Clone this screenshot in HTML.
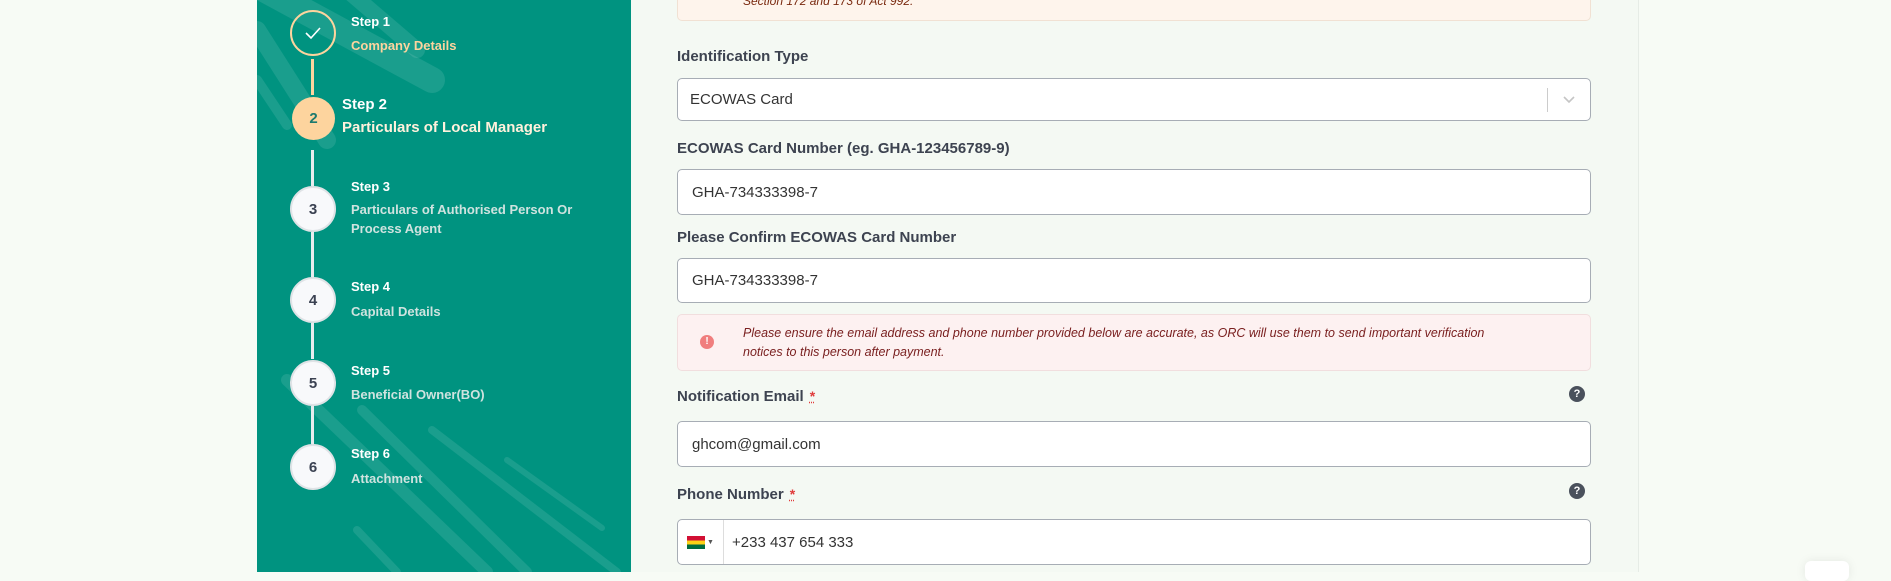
<!DOCTYPE html>
<html><head><meta charset="utf-8"><style>
*{box-sizing:border-box;margin:0;padding:0}
body{width:1891px;height:572px;overflow:hidden;background:#f7fbf5;font-family:"Liberation Sans",sans-serif;position:relative}
.side{position:absolute;left:257px;top:0;width:374px;height:572px;background:#009380;overflow:hidden}
.main{position:absolute;left:631px;top:0;width:1008px;height:572px;background:#f4f9f3;border-right:1px solid #e6ece6}
.circ{position:absolute;left:290px;width:46px;height:46px;border-radius:50%;background:#f8f9fb;border:2px solid #dfe3e6;color:#3b4252;font-size:15px;display:flex;align-items:center;justify-content:center;font-weight:600}
.line{position:absolute;left:311px;width:3px;background:#e8ecee}
.st{position:absolute;left:351px;color:#fff;font-weight:bold;font-size:13px}
.ds{position:absolute;left:351px;color:#cfe3df;font-weight:bold;font-size:13px;line-height:19px}
.lbl{position:absolute;left:677px;font-size:15px;font-weight:bold;color:#3d4350}
.inp{position:absolute;left:677px;width:914px;background:#fff;border:1px solid #a7adb5;border-radius:5px;font-size:15px;color:#333;padding-left:14px;display:flex;align-items:center}
.help{position:absolute;left:1569px;width:16px;height:16px;border-radius:50%;background:#4a515c;color:#fff;font-size:11px;font-weight:bold;text-align:center;line-height:16px}
.req{color:#e03b3b;font-size:14px;margin-left:6px;text-decoration:underline dotted}
</style></head><body>
<div class="side">
<svg width="374" height="572" style="position:absolute;left:0;top:0">
<g stroke="rgba(255,255,255,0.1)" stroke-linecap="round">
<line x1="-10" y1="-20" x2="175" y2="80" stroke-width="26"/>
<line x1="0" y1="30" x2="70" y2="140" stroke-width="18"/>
<line x1="0" y1="80" x2="30" y2="125" stroke-width="10"/>
<line x1="90" y1="-10" x2="160" y2="50" stroke-width="16"/>
<line x1="30" y1="380" x2="230" y2="572" stroke-width="12"/>
<line x1="105" y1="410" x2="270" y2="572" stroke-width="10"/>
<line x1="175" y1="430" x2="360" y2="572" stroke-width="8"/>
<line x1="250" y1="460" x2="345" y2="528" stroke-width="6"/>
<line x1="100" y1="530" x2="140" y2="572" stroke-width="8"/>
</g></svg>
</div>
<div class="line" style="top:59px;height:36px;background:#fdd49e"></div>
<div class="line" style="top:150px;height:36px"></div>
<div class="line" style="top:232px;height:45px"></div>
<div class="line" style="top:323px;height:36px"></div>
<div class="line" style="top:406px;height:38px"></div>
<div class="circ" style="top:10px;background:transparent;border:2px solid #fdd49e"><svg width="18" height="14"><path d="M2 7 L7 12 L16 2" fill="none" stroke="#fff" stroke-width="1.6"/></svg></div>
<div class="st" style="top:14px">Step 1</div><div class="ds" style="top:36px;color:#fdd49e">Company Details</div>
<div class="circ" style="top:97px;left:292px;width:43px;height:43px;background:#fdd49e;border:none;color:#1c7a6e">2</div>
<div class="st" style="top:96px;left:342px;font-size:15px">Step 2</div><div class="ds" style="top:118px;left:342px;font-size:15px;color:#fff1dc">Particulars of Local Manager</div>
<div class="circ" style="top:186px">3</div>
<div class="st" style="top:179px">Step 3</div><div class="ds" style="top:200px">Particulars of Authorised Person Or<br>Process Agent</div>
<div class="circ" style="top:277px">4</div>
<div class="st" style="top:279px">Step 4</div><div class="ds" style="top:302px">Capital Details</div>
<div class="circ" style="top:360px">5</div>
<div class="st" style="top:363px">Step 5</div><div class="ds" style="top:385px">Beneficial Owner(BO)</div>
<div class="circ" style="top:444px">6</div>
<div class="st" style="top:446px">Step 6</div><div class="ds" style="top:469px">Attachment</div>

<div class="main"></div>
<div style="position:absolute;left:677px;top:-10px;width:914px;height:31px;background:#fef4ec;border:1px solid #f1e1d3;border-radius:5px"></div>
<div style="position:absolute;left:743px;top:-6px;font-size:12px;font-style:italic;color:#7a2a10">Section 172 and 173 of Act 992.</div>

<div class="lbl" style="top:48px">Identification Type</div>
<div class="inp" style="top:78px;height:43px;padding-left:12px">ECOWAS Card
<div style="position:absolute;right:42px;top:9px;width:1px;height:24px;background:#ccc"></div>
<svg style="position:absolute;right:14px;top:16px" width="14" height="10"><path d="M2 2 L7 7 L12 2" fill="none" stroke="#c5c5c5" stroke-width="1.6"/></svg></div>
<div class="lbl" style="top:140px">ECOWAS Card Number (eg. GHA-123456789-9)</div>
<div class="inp" style="top:169px;height:46px">GHA-734333398-7</div>
<div class="lbl" style="top:229px">Please Confirm ECOWAS Card Number</div>
<div class="inp" style="top:258px;height:45px">GHA-734333398-7</div>

<div style="position:absolute;left:677px;top:314px;width:914px;height:57px;background:#fdf1f1;border:1px solid #f1dede;border-radius:5px"></div>
<div style="position:absolute;left:700px;top:335px;width:14px;height:14px;border-radius:50%;background:#f07e7e;color:#fff;font-size:10px;font-weight:bold;text-align:center;line-height:14px">!</div>
<div style="position:absolute;left:743px;top:324px;font-size:12.5px;font-style:italic;color:#7a2020;line-height:19px;white-space:nowrap">Please ensure the email address and phone number provided below are accurate, as ORC will use them to send important verification<br>notices to this person after payment.</div>

<div class="lbl" style="top:388px">Notification Email<span class="req">*</span></div>
<div class="help" style="top:386px">?</div>
<div class="inp" style="top:421px;height:46px">ghcom@gmail.com</div>
<div class="lbl" style="top:486px">Phone Number<span class="req">*</span></div>
<div class="help" style="top:483px">?</div>
<div class="inp" style="top:519px;height:46px;padding-left:0">
<div style="width:46px;height:100%;border-right:1px solid #ddd;display:flex;align-items:center;padding-left:9px">
<div style="width:18px;height:13px;background:linear-gradient(#d21034 33%,#fcd116 33%,#fcd116 66%,#006b3f 66%)"></div><span style="font-size:7px;color:#555;margin-left:2px">▼</span></div>
<span style="margin-left:8px">+233 437 654 333</span></div>
<div style="position:absolute;left:1805px;top:561px;width:44px;height:20px;background:#fff;border-radius:6px;box-shadow:0 0 10px rgba(0,0,0,0.08)"></div>
</body></html>
